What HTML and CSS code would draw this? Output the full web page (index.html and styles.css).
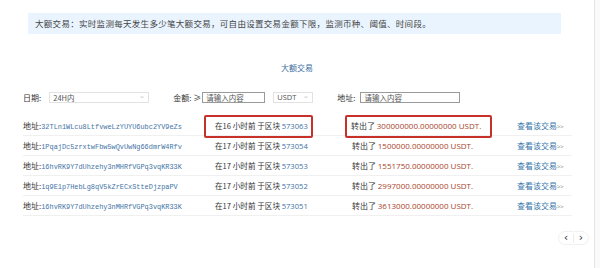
FILE: index.html
```html
<!DOCTYPE html>
<html>
<head>
<meta charset="UTF-8">
<title>大额交易</title>
<link rel="stylesheet" href="styles.css">
</head>
<body>
<div class="page">
  <div class="notice">大额交易：实时监测每天发生多少笔大额交易，可自由设置交易金额下限，监测币种、阈值、时间段。</div>

  <div class="title">大额交易</div>

  <div class="filters">
    <label class="lbl">日期:</label>
    <div class="select wide"><span>24H内</span><span class="chev">&#8964;</span></div>
    <label class="lbl amount-lbl">金额: ≥</label>
    <div class="input short">请输入内容</div>
    <div class="select coin"><span>USDT</span><span class="chev">&#8964;</span></div>
    <label class="lbl addr-lbl">地址:</label>
    <div class="input long">请输入内容</div>
  </div>

  <div class="list">
    <div class="row">
      <div class="c-addr">地址:<span class="hash">32TLn1WLcu8LtfvweLzYUYU6ubc2YV9eZs</span></div>
      <div class="c-time"><span class="mark m1">在16 小时前 于区块 <span class="blk">573063</span></span></div>
      <div class="c-amt"><span class="mark m2">转出了 <span class="num">300000000.00000000 USDT.</span></span></div>
      <div class="c-link"><a href="#">查看该交易</a><span class="arr">&gt;&gt;</span></div>
    </div>
    <div class="row">
      <div class="c-addr">地址:<span class="hash">1PqajDc5zrxtwFbw5wQvUwNg66dmrW4Rfv</span></div>
      <div class="c-time">在17 小时前 于区块 <span class="blk">573054</span></div>
      <div class="c-amt">转出了 <span class="num">1500000.00000000 USDT.</span></div>
      <div class="c-link"><a href="#">查看该交易</a><span class="arr">&gt;&gt;</span></div>
    </div>
    <div class="row">
      <div class="c-addr">地址:<span class="hash">16hvRK9Y7dUhzehy3nMHRfVGPq3vqKR33K</span></div>
      <div class="c-time">在17 小时前 于区块 <span class="blk">573053</span></div>
      <div class="c-amt">转出了 <span class="num">1551750.00000000 USDT.</span></div>
      <div class="c-link"><a href="#">查看该交易</a><span class="arr">&gt;&gt;</span></div>
    </div>
    <div class="row">
      <div class="c-addr">地址:<span class="hash">1q9E1p7HebLg8qV5kZrECxStteDjzpaPV</span></div>
      <div class="c-time">在17 小时前 于区块 <span class="blk">573052</span></div>
      <div class="c-amt">转出了 <span class="num">2997000.00000000 USDT.</span></div>
      <div class="c-link"><a href="#">查看该交易</a><span class="arr">&gt;&gt;</span></div>
    </div>
    <div class="row">
      <div class="c-addr">地址:<span class="hash">16hvRK9Y7dUhzehy3nMHRfVGPq3vqKR33K</span></div>
      <div class="c-time">在17 小时前 于区块 <span class="blk">573051</span></div>
      <div class="c-amt">转出了 <span class="num">3613000.00000000 USDT.</span></div>
      <div class="c-link"><a href="#">查看该交易</a><span class="arr">&gt;&gt;</span></div>
    </div>
  </div>

  <div class="pager">
    <span class="pg">&lsaquo;</span><span class="pg-sep"></span><span class="pg">&rsaquo;</span>
  </div>
</div>
</body>
</html>
```

FILE: styles.css
```css
body {
    margin: 0;
    background-color: #fafafa;
    font-family: "Noto Sans CJK SC", "Noto Sans", sans-serif;
    font-size: 8px;
    color: #333;
}
.page {
    width: 595px;
    height: 268px;
    background-color: #fff;
    border-right: 1px solid #e3e3e3;
    box-sizing: border-box;
    padding-top: 13px;
}
.notice {
    margin: 0 33px 0 28px;
    height: 21px;
    line-height: 21px;
    padding-left: 7px;
    background-color: #eaf4fe;
    font-size: 8.5px;
    letter-spacing: 0.3px;
    color: #444;
}
.title {
    margin-top: 27px;
    text-align: center;
    color: #3a6e9f;
    line-height: 14px;
}
.filters {
    display: flex;
    align-items: center;
    margin-top: 16px;
    padding-left: 23px;
    height: 12px;
}
.lbl {
    color: #333;
}
.select, .input {
    height: 11px;
    box-sizing: border-box;
    border: 1px solid #ccc;
    font-size: 7.5px;
    line-height: 9px;
    display: flex;
    align-items: center;
    justify-content: space-between;
    padding: 0 3px;
}
.select {
    border-color: #e2e2e2;
    color: #555;
}
.input {
    border-color: #9a9a9a;
    color: #555;
}
.chev {
    color: #bbb;
    font-size: 7px;
    line-height: 7px;
    margin-top: -4px;
}
.wide {
    margin-left: 8px;
    width: 100px;
}
.amount-lbl {
    margin-left: 24px;
}
.short {
    margin-left: 1px;
    width: 63px;
}
.coin {
    margin-left: 8px;
    width: 40px;
    font-family: "Open Sans", sans-serif;
}
.addr-lbl {
    margin-left: 24px;
}
.long {
    margin-left: 5px;
    width: 100px;
}
.list {
    margin-top: 13px;
    margin-left: 23px;
    width: 549px;
}
.row {
    display: flex;
    align-items: center;
    height: 20px;
    border-bottom: 1px solid #f0f0f0;
    box-sizing: border-box;
    white-space: nowrap;
}
.c-addr {
    width: 192px;
}
.hash {
    font-family: "Liberation Mono", monospace;
    font-size: 6.9px;
    color: #3f74a6;
}
.c-time {
    width: 137px;
    font-size: 7.6px;
}
.c-amt {
    width: 165px;
}
.num, .blk {
    font-family: "Open Sans", sans-serif;
}
.blk {
    color: #3f74a6;
}
.num {
    color: #a9432b;
}
.mark {
    display: inline-block;
    border: 2px solid #c8302a;
    border-radius: 2px;
    padding: 5px 3px 6px 9px;
    margin: -5px 0 -6px -11px;
    line-height: 8px;
}
.m2 {
    padding: 5px 9px 6px 4px;
    margin: -5px -9px -6px -7px;
}
.c-link a {
    color: #3676ac;
    text-decoration: none;
}
.arr {
    color: #999;
    font-size: 6px;
}
.pager {
    display: flex;
    justify-content: flex-end;
    align-items: center;
    margin-top: 16px;
    padding-right: 6px;
}
.pg {
    width: 14px;
    height: 12px;
    line-height: 11px;
    text-align: center;
    font-size: 11px;
    color: #333;
    font-family: "DejaVu Sans", sans-serif;
    background: #fff;
}
.pg-sep {
    width: 1px;
    height: 9px;
    background: #ececec;
}
.pg:first-child {
    border-radius: 6px 0 0 6px;
    box-shadow: -1px 0 0 #f0f0f0, 0 1px 0 #f0f0f0, 0 -1px 0 #f0f0f0;
}
.pg:last-child {
    border-radius: 0 6px 6px 0;
    box-shadow: 1px 0 0 #f0f0f0, 0 1px 0 #f0f0f0, 0 -1px 0 #f0f0f0;
}
```
